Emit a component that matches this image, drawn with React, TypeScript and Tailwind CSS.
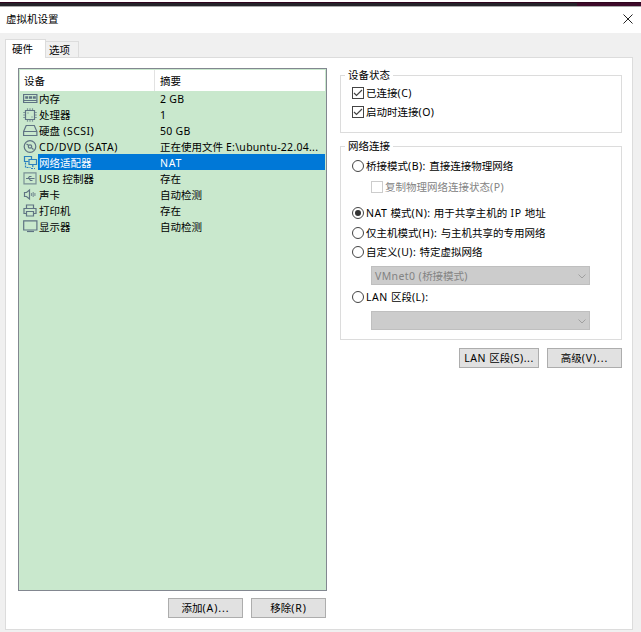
import type { ReactNode } from "react";

type Device = {
  name: string;
  summary: string;
  icon: ReactNode;
};

function Icon({ children }: { children: ReactNode }) {
  return (
    <svg width="15" height="14" viewBox="0 0 15 14" fill="none" stroke="#5f7383" strokeWidth="1.2" className="mt-[2px] shrink-0">
      {children}
    </svg>
  );
}

// Latin runs are spaced a little wider than the Chinese ones
function Text({ children, tracking = "tracking-[0.5px]" }: { children: string; tracking?: string }) {
  const runs = children.split(/([\x20-\x7e]+)/).filter(Boolean);
  return (
    <span className="whitespace-pre">
      {runs.map((run, i) => (
        <span key={i} className={/[\x20-\x7e]/.test(run) ? tracking : ""}>{run}</span>
      ))}
    </span>
  );
}

const devices: Device[] = [
  {
    name: "内存",
    summary: "2 GB",
    icon: (
      <Icon>
        <path d="M.6 2.500h13.300v8H.6z M1 8.500h13" />
        <path d="M2.200 5.500h3M6 5.500h3M9.800 5.500h3" strokeWidth="2.400" />
      </Icon>
    ),
  },
  {
    name: "处理器",
    summary: "1",
    icon: (
      <Icon>
        <path d="M2.500 2.500h9v9h-9z" />
        <path
          d="M4.500 .2v2M7 .2v2M9.500 .2v2M4.500 11.800v2M7 11.800v2M9.500 11.800v2M.2 4.500h2M.2 7h2M.2 9.500h2M11.800 4.500h2M11.800 7h2M11.800 9.500h2"
          strokeOpacity=".7"
        />
        <path d="M4.500 5h1M8.500 9h1" />
      </Icon>
    ),
  },
  {
    name: "硬盘 (SCSI)",
    summary: "50 GB",
    icon: (
      <Icon>
        <path d="M.6 7.500L3.200 1.500h8.100L13.900 7.500V11.500H.6z M1 7.500h13" />
      </Icon>
    ),
  },
  {
    name: "CD/DVD (SATA)",
    summary: "正在使用文件 E:\\ubuntu-22.04...",
    icon: (
      <Icon>
        <circle cx="7" cy="6.500" r="5.800" />
        <circle cx="7" cy="6.500" r="1.700" />
        <path d="M3.500 4l2 1.300M8.800 8l1.700 1.500" />
      </Icon>
    ),
  },
  {
    name: "网络适配器",
    summary: "NAT",
    icon: (
      <Icon>
        <g stroke="#2b80bd">
          <path d="M5.500 5.500H1.500v-5h7V3" />
          <path d="M6 3.500h7.500v5H6z" />
          <path d="M2.500 6.500v5h5M9.800 9v3M8 12.500h4" strokeDasharray="2 1" />
        </g>
      </Icon>
    ),
  },
  {
    name: "USB 控制器",
    summary: "存在",
    icon: (
      <Icon>
        <path d="M1 .8h12v11H1z" strokeOpacity=".75" />
        <path d="M3 6.500h8.500M5 6.500l1.500-2h2M6 6.500l1.500 2h2" />
      </Icon>
    ),
  },
  {
    name: "声卡",
    summary: "自动检测",
    icon: (
      <Icon>
        <path d="M1.500 4.500h2L6.500 2v9L3.500 8.500h-2z" />
        <path d="M8.500 5v3M10.200 4v5M11.900 5v3" strokeOpacity=".7" />
      </Icon>
    ),
  },
  {
    name: "打印机",
    summary: "存在",
    icon: (
      <Icon>
        <path d="M3.500 4.500V1h7V4.500M3.500 9.500H1v-5h12v5h-2.500M3.500 7.500h7v4.500h-7z" />
      </Icon>
    ),
  },
  {
    name: "显示器",
    summary: "自动检测",
    icon: (
      <Icon>
        <path d="M.7 .8h13.200v9.200H.7z" />
        <path d="M4 11.500h7" />
      </Icon>
    ),
  },
];

function Button({ label, className = "w-[75px]", tracking }: { label: string; className?: string; tracking?: string }) {
  return (
    <button className={`flex h-[20px] items-center justify-center border border-[#adadad] bg-[#e1e1e1] ${className}`}>
      <Text tracking={tracking}>{label}</Text>
    </button>
  );
}

function Checkbox({ label, checked, disabled }: { label: string; checked?: boolean; disabled?: boolean }) {
  return (
    <label className={`flex items-center gap-[2px] ${disabled ? "text-[#838383]" : ""}`}>
      <span className={`flex size-3 items-center justify-center border ${disabled ? "border-[#ccc]" : "border-[#444]"}`}>
        {checked && (
          <svg width="10" height="10" viewBox="0 0 10 10" fill="none" stroke="#444" strokeWidth="1.2">
            <path d="M1 5l2.500 2.500L9 2" />
          </svg>
        )}
      </span>
      <Text>{label}</Text>
    </label>
  );
}

function Radio({ label, checked }: { label: string; checked?: boolean }) {
  return (
    <label className="flex h-[19.5px] items-center gap-[2px]">
      <span className="flex size-3 items-center justify-center rounded-full border border-[#444]">
        {checked && <span className="size-[6px] rounded-full bg-[#333]" />}
      </span>
      <Text>{label}</Text>
    </label>
  );
}

function Select({ value = "" }: { value?: string }) {
  return (
    <div className="ml-[19px] flex h-[19px] w-[219px] items-center justify-between border border-[#bfbfbf] bg-[#ccc] pt-px pr-[3px] pl-[3px] text-[#838383]">
      <Text tracking="tracking-[0.4px]">{value}</Text>
      <svg width="8" height="5" viewBox="0 0 8 5" fill="none" stroke="#a0a0a0">
        <path d="M.5.5L4 4 7.500.5" />
      </svg>
    </div>
  );
}

function Group({ title, className, children }: { title: string; className: string; children: ReactNode }) {
  return (
    <section className={`border border-[#dcdcdc] pl-[11px] ${className}`}>
      <h2 className="-mt-[9px] mb-[2px] -ml-[7px] flex h-4 w-fit items-center bg-white px-[3px]">{title}</h2>
      {children}
    </section>
  );
}

export default function App() {
  return (
    <div className="flex h-[632px] w-[641px] flex-col overflow-hidden bg-[#f0f0f0] font-['Noto_Sans','Noto_Sans_CJK_SC',sans-serif] text-[10.5px] leading-4 whitespace-nowrap text-black">
      <div className="h-[2px] bg-white" />
      <div className="h-1 border-t border-[#30051f] bg-gradient-to-r from-[#25232a] from-90% to-[#3d0a2a] to-90%" />
      <header className="flex h-[27px] items-center justify-between border-t border-[#aaa] bg-white pr-2 pb-[2px] pl-[6px]">
        <h1>虚拟机设置</h1>
        <svg width="10" height="10" viewBox="0 0 10 10" stroke="#222">
          <path d="M.5.5l9 9M9.500.5l-9 9" />
        </svg>
      </header>

      <nav className="z-10 -mb-px ml-[5px] flex h-[25px] items-end">
        <div className="flex h-[19px] w-[41px] items-center border border-b-0 border-[#dcdcdc] bg-white pl-[6px]">硬件</div>
        <div className="flex h-[17px] w-[33px] items-center border border-l-0 border-[#dcdcdc] pl-[3px]">选项</div>
      </nav>

      <main className="ml-[5px] flex h-[573px] w-[628px] border border-[#dcdcdc] bg-white">
        <div className="mt-[10px] ml-3 w-[309px]">
          <div className="h-[523px] border border-[#828790] bg-[#c9e8cd] p-px">
            <div className="relative flex h-[21px] items-center bg-white">
              <span className="h-full w-[135px] border-r border-[#e2e2e2] pt-[3px] pl-1">设备</span>
              <span className="pl-[5px]">摘要</span>
            </div>
            <div className="-mt-px">
              {devices.map((device) => (
                <div key={device.name} className="flex h-4 pl-[3px]">
                  {device.icon}
                  <div className={`flex flex-1 pt-px ${device.name === "网络适配器" ? "bg-[#0078d7] text-white" : ""}`}>
                    <span className="w-[122px] pl-px">
                      <Text tracking={device.name.startsWith("USB") ? "tracking-[0.1px]" : undefined}>{device.name}</Text>
                    </span>
                    <Text tracking={device.summary === "NAT" ? "tracking-[0.8px]" : "tracking-[0.27px]"}>{device.summary}</Text>
                  </div>
                </div>
              ))}
            </div>
          </div>
          <div className="mt-[7px] mr-px flex justify-end gap-2">
            <Button label="添加(A)..." tracking="tracking-[0.9px]" />
            <Button label="移除(R)" tracking="tracking-[0.9px]" />
          </div>
        </div>

        <div className="mt-[17px] ml-[13px] w-[282px]">
          <Group title="设备状态" className="h-[58px]">
            <div className="mt-[2px] flex flex-col gap-[3px]">
              <Checkbox label="已连接(C)" checked />
              <Checkbox label="启动时连接(O)" checked />
            </div>
          </Group>
          <Group title="网络连接" className="mt-[13px] h-[194px]">
            <div>
              <Radio label="桥接模式(B): 直接连接物理网络" />
              <div className="mt-[3px] mb-[9px] ml-[19px]">
                <Checkbox label="复制物理网络连接状态(P)" disabled />
              </div>
              <Radio label="NAT 模式(N): 用于共享主机的 IP 地址" checked />
              <Radio label="仅主机模式(H): 与主机共享的专用网络" />
              <Radio label="自定义(U): 特定虚拟网络" />
            </div>
            <div className="mt-1">
              <Select value="VMnet0 (桥接模式)" />
            </div>
            <div className="flex h-[26px] items-center pb-[2px]">
              <Radio label="LAN 区段(L):" />
            </div>
            <Select />
          </Group>
          <div className="mt-2 flex justify-end gap-2">
            <Button label="LAN 区段(S)..." className="w-[80px]" />
            <Button label="高级(V)..." tracking="tracking-[0.9px]" />
          </div>
        </div>
      </main>
    </div>
  );
}
